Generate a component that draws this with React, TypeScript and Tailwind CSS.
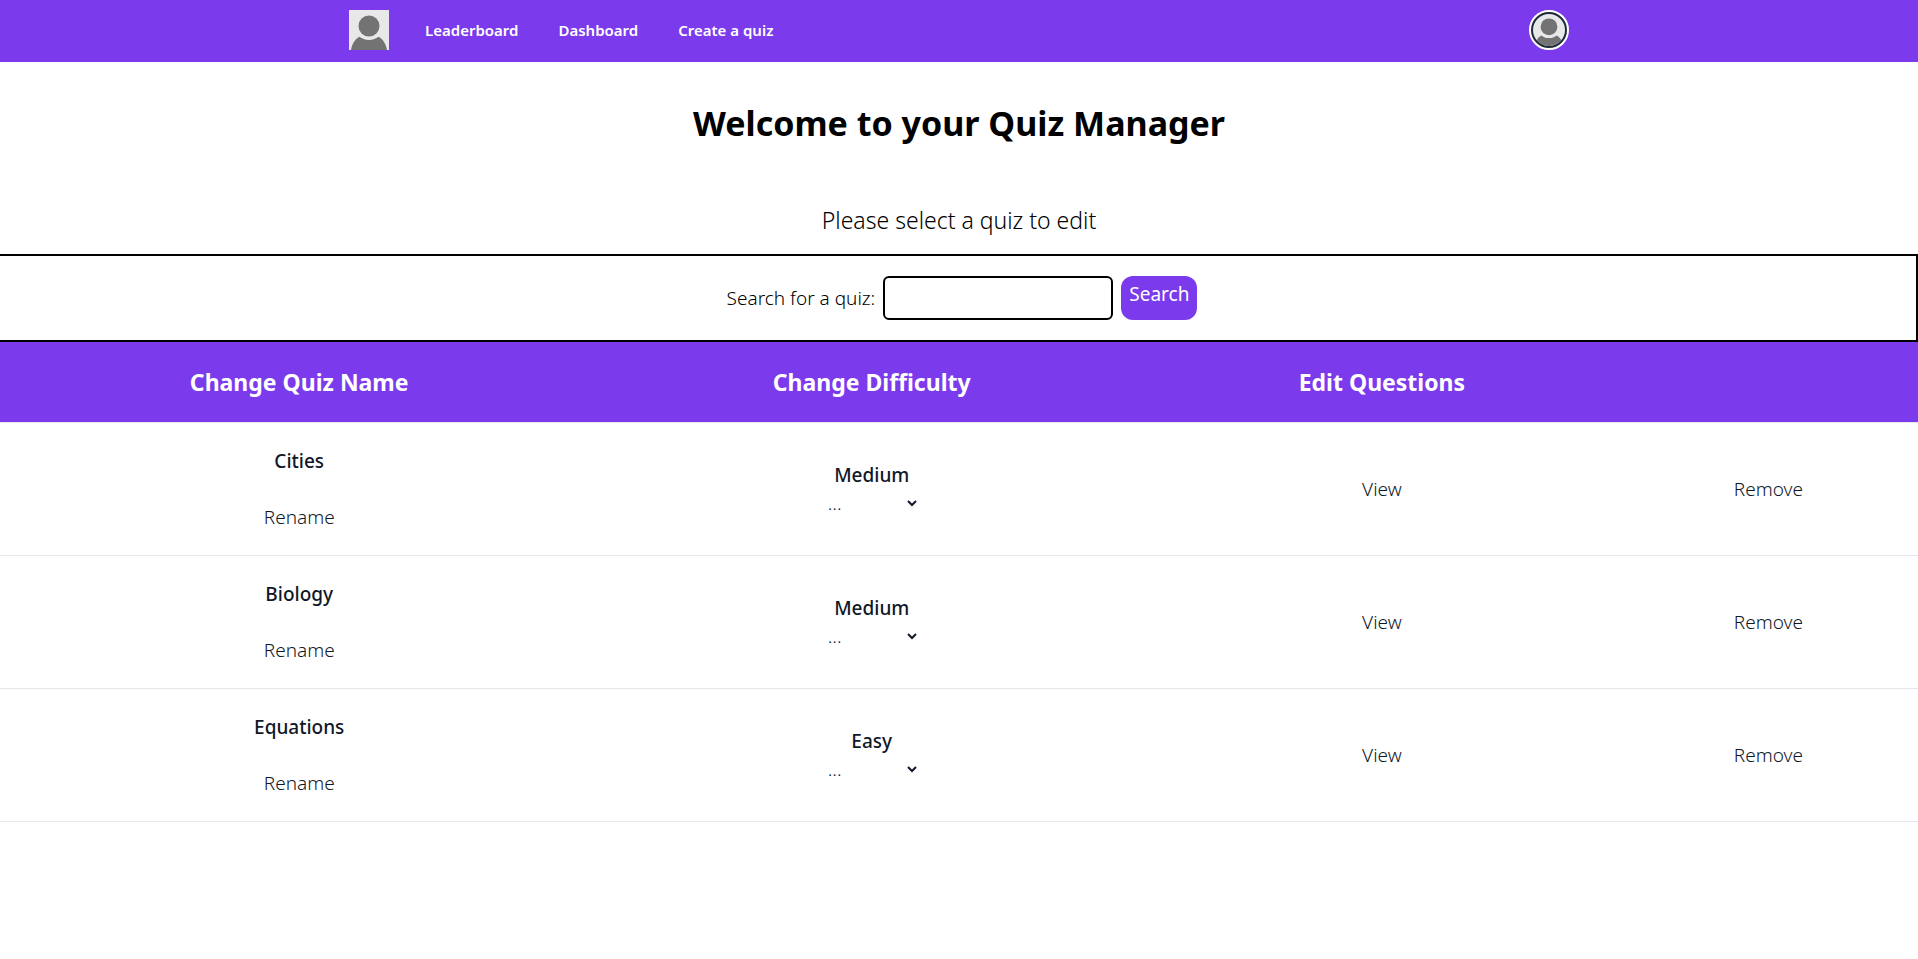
import { useState } from "react";

type Quiz = { name: string; difficulty: string };

const quizzes: Quiz[] = [
  { name: "Cities", difficulty: "Medium" },
  { name: "Biology", difficulty: "Medium" },
  { name: "Equations", difficulty: "Easy" },
];

const links = ["Leaderboard", "Dashboard", "Create a quiz"];

function Person({ className }: { className: string }) {
  return (
    <svg viewBox="0 0 40 40" className={className} aria-hidden="true">
      <rect width="40" height="40" fill="#e8e8e8" />
      <path d="M2 40C3 34 6.500 28.500 10.500 26.800C13 28.800 16 30 20 30S27 28.800 29.500 26.800C33.500 28.500 37 34 38 40Z" fill="#737373" />
      <circle cx="20" cy="16" r="10.500" fill="#737373" />
    </svg>
  );
}

function NavBar() {
  return (
    <nav className="bg-[#7c3aed] px-4">
      <div className="mx-auto flex h-[62px] max-w-[1220px] items-start justify-between pt-2.5">
        <div className="flex items-center">
          <a href="#home" aria-label="Home">
            <Person className="block size-10" />
          </a>
          <div className="ml-9 flex gap-10">
            {links.map((link) => (
              <a key={link} href="#nav" className="text-[15px] leading-5 font-semibold text-white">
                {link}
              </a>
            ))}
          </div>
        </div>
        <button
          type="button"
          aria-label="Open user menu"
          className="size-10 rounded-full border-2 border-white bg-gray-800 p-0.5"
        >
          <Person className="block size-8 rounded-full" />
        </button>
      </div>
    </nav>
  );
}

function QuizRow({ quiz }: { quiz: Quiz }) {
  const [choice, setChoice] = useState("...");
  return (
    <tr className="h-[133px] border-t border-b border-gray-200 text-gray-900">
      <td>
        <div className="flex flex-col items-center gap-7">
          <span className="font-medium">{quiz.name}</span>
          <button type="button">Rename</button>
        </div>
      </td>
      <td>
        <div className="flex flex-col items-center">
          <span className="font-medium">{quiz.difficulty}</span>
          <select
            aria-label={`Difficulty of ${quiz.name}`}
            value={choice}
            onChange={(e) => setChoice(e.target.value)}
            className="h-7 w-24 bg-white"
          >
            <option>...</option>
            <option>Easy</option>
            <option>Medium</option>
            <option>Hard</option>
          </select>
        </div>
      </td>
      <td>
        <a href="#view">View</a>
      </td>
      <td>
        <button type="button">Remove</button>
      </td>
    </tr>
  );
}

export default function App() {
  return (
    <div className="min-h-screen bg-white font-['Noto_Sans','Open_Sans',sans-serif] text-black">
      <NavBar />
      <main>
        <h1 className="pt-[38px] text-center text-[34px] leading-[46px] font-bold">Welcome to your Quiz Manager</h1>
        <p className="pt-[58px] pb-[18px] text-center text-[23px] leading-8 font-light">Please select a quiz to edit</p>
        <form
          onSubmit={(e) => e.preventDefault()}
          className="flex items-center justify-center gap-2 border-y-2 border-r-2 border-black py-5 pl-2 text-[19px] leading-7"
        >
          <label htmlFor="search" className="font-light">
            Search for a quiz:
          </label>
          <input id="search" type="text" className="h-11 w-[230px] rounded-md border-2 border-black px-2" />
          <button type="submit" className="h-11 rounded-xl bg-[#7c3aed] px-2 pt-1 pb-3 text-white">
            Search
          </button>
        </form>
        <table className="w-full table-fixed border-collapse text-center text-[19px] leading-7 font-light">
          <colgroup>
            <col className="w-[31.2%]" />
            <col className="w-[28.5%]" />
            <col className="w-[24.7%]" />
            <col className="w-[15.6%]" />
          </colgroup>
          <thead className="bg-[#7c3aed] text-[23px] font-bold text-white">
            <tr className="h-20">
              <th scope="col">Change Quiz Name</th>
              <th scope="col">Change Difficulty</th>
              <th scope="col">Edit Questions</th>
              <td />
            </tr>
          </thead>
          <tbody>
            {quizzes.map((quiz) => (
              <QuizRow key={quiz.name} quiz={quiz} />
            ))}
          </tbody>
        </table>
      </main>
    </div>
  );
}
